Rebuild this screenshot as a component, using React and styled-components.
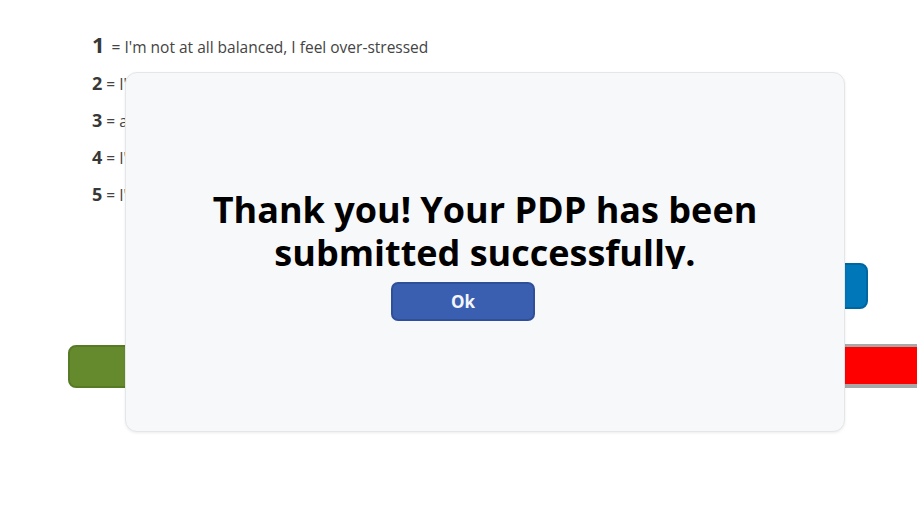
import React from "react";
import styled, { createGlobalStyle } from "styled-components";

const GlobalStyle = createGlobalStyle`
  html, body {
    margin: 0;
    padding: 0;
    background: #fff;
    overflow: hidden;
  }
  body {
    font-family: "Open Sans", "Noto Sans", sans-serif;
  }
`;

const scale = [
  { n: 1, text: "I'm not at all balanced, I feel over-stressed" },
  { n: 2, text: "I'm a little balanced, I feel stressed most of the time" },
  { n: 3, text: "a bit balanced, sometimes I feel stressed" },
  { n: 4, text: "I'm quite balanced, I rarely feel stressed" },
  { n: 5, text: "I'm completely balanced, I never feel stressed" },
];

const Page = styled.main`
  width: 917px;
  height: 530px;
  padding: 33px 0 0 68px;
  box-sizing: border-box;
  position: relative;
  overflow: hidden;
`;

const Legend = styled.ul`
  list-style: none;
  margin: 0 0 0 24px;
  padding: 0;
  display: flex;
  flex-direction: column;
  gap: 14px;
`;

const LegendRow = styled.li`
  display: flex;
  align-items: baseline;
  gap: ${(p) => (p.$first ? "7px" : "4px")};
  color: #444;
  font-size: 15.5px;
  line-height: 22px;
  white-space: nowrap;
`;

const Score = styled.span`
  font-weight: 700;
  color: #383838;
  font-size: ${(p) => (p.$first ? "22px" : "18px")};
`;

const SubmitRow = styled.div`
  display: flex;
  justify-content: flex-end;
  margin: 57px 49px 0 0;
`;

const SubmitButton = styled.button`
  width: 140px;
  height: 46px;
  background: #0077b8;
  border: 2px solid #00669f;
  border-radius: 8px;
  color: #fff;
  font: 600 16px "Open Sans", sans-serif;
`;

const BottomRow = styled.div`
  display: flex;
  align-items: center;
  justify-content: space-between;
  margin-top: 35px;
`;

const BackButton = styled.button`
  width: 180px;
  height: 43px;
  background: #658a2e;
  border: 2px solid #577a25;
  border-radius: 8px;
  color: #fff;
  font: 600 16px "Open Sans", sans-serif;
`;

const ResetBar = styled.div`
  width: 300px;
  height: 37px;
  background: #ff0000;
  border-top: 3px solid #a8a8a8;
  border-bottom: 4px solid #a8a8a8;
  margin-right: -30px;
`;

const Dialog = styled.div`
  position: absolute;
  left: 125px;
  top: 72px;
  width: 720px;
  height: 360px;
  box-sizing: border-box;
  background: #f7f8fa;
  border: 1px solid #e4e6e9;
  border-radius: 12px;
  box-shadow: 0 1px 3px rgba(0, 0, 0, 0.08);
  display: flex;
  flex-direction: column;
  align-items: center;
  justify-content: center;
  gap: 13px;
  padding-top: 4px;
`;

const Message = styled.h2`
  margin: 0;
  height: 81px;
  overflow: hidden;
  text-align: center;
  font-size: 36px;
  line-height: 43px;
  font-weight: 700;
  color: #000;
  width: 600px;
`;

const OkButton = styled.button`
  width: 144px;
  height: 39px;
  margin-right: 44px;
  background: #3a5fb0;
  border: 2px solid #2f4f98;
  border-radius: 7px;
  color: #f4f6fb;
  font: 700 17px "Open Sans", sans-serif;
  cursor: pointer;
`;

export default function App() {
  return (
    <>
      <GlobalStyle />
      <Page>
        <Legend>
          {scale.map((s) => (
            <LegendRow key={s.n} $first={s.n === 1}>
              <Score $first={s.n === 1}>{s.n}</Score>
              <span>= {s.text}</span>
            </LegendRow>
          ))}
        </Legend>
        <SubmitRow>
          <SubmitButton>Submit</SubmitButton>
        </SubmitRow>
        <BottomRow>
          <BackButton>Back</BackButton>
          <ResetBar />
        </BottomRow>
        <Dialog>
          <Message>Thank you! Your PDP has been submitted successfully.</Message>
          <OkButton>Ok</OkButton>
        </Dialog>
      </Page>
    </>
  );
}
